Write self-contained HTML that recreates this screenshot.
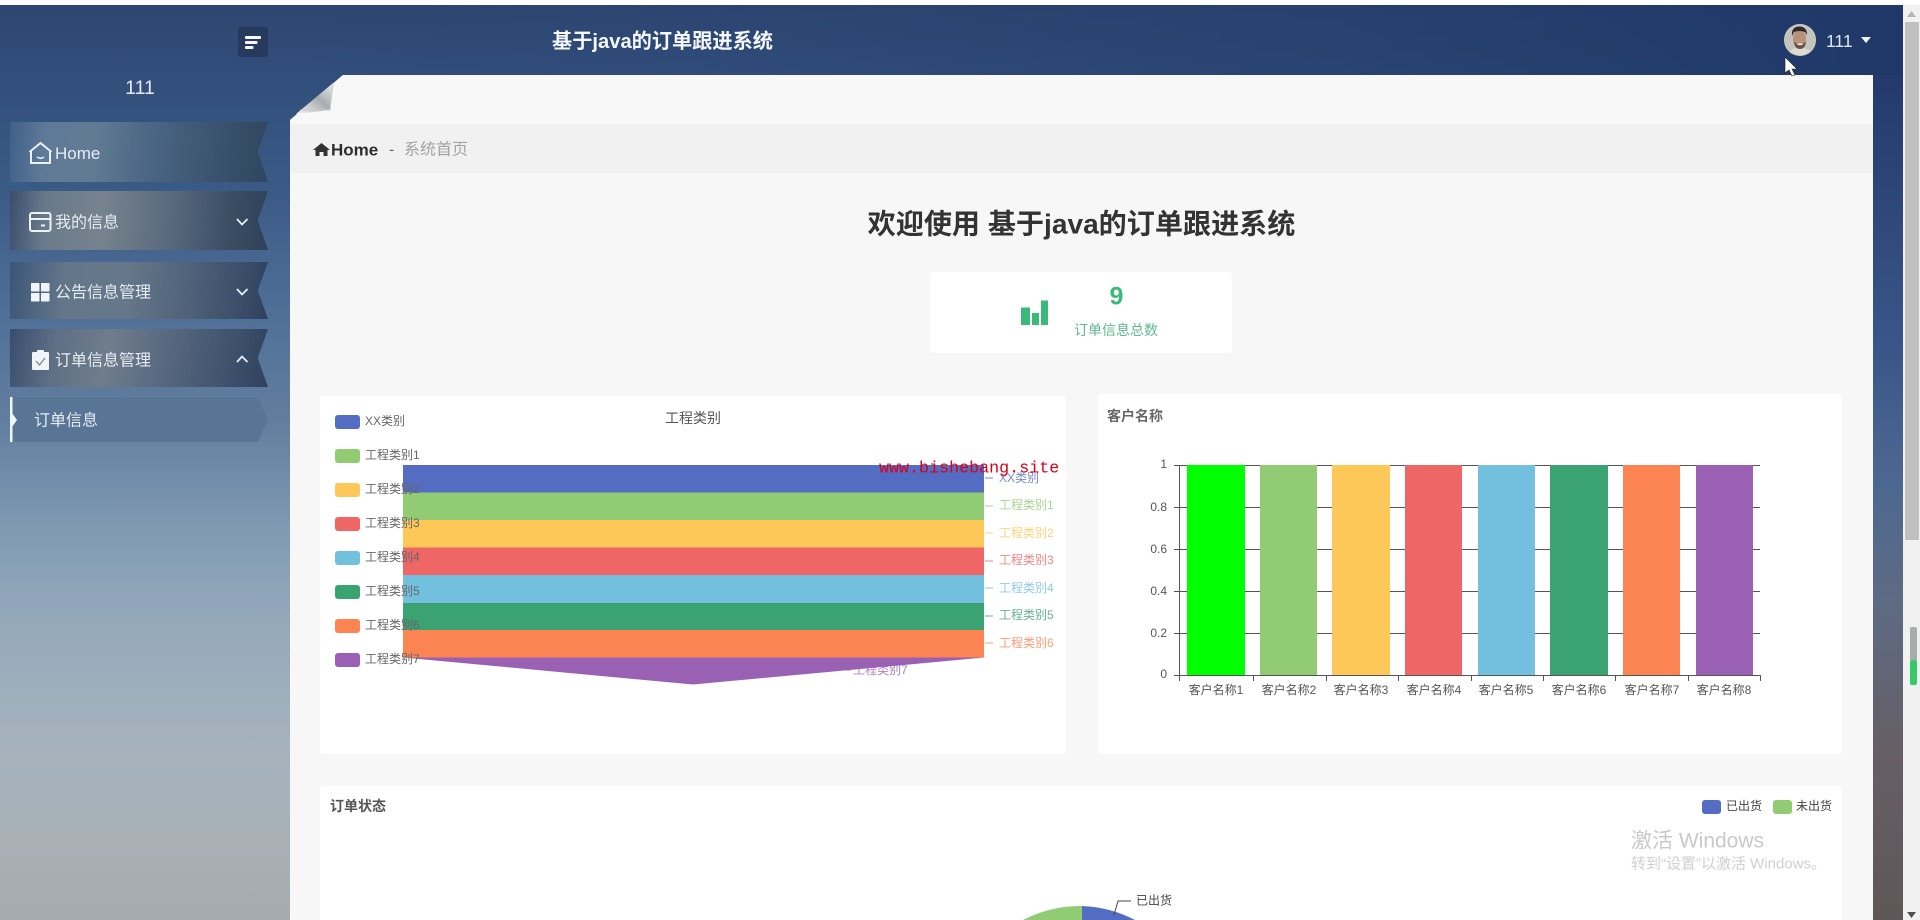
<!DOCTYPE html>
<html lang="zh">
<head>
<meta charset="utf-8">
<title>基于java的订单跟进系统</title>
<style>
html,body{margin:0;padding:0;width:1920px;height:920px;overflow:hidden;background:#fff;}
body{position:relative;font-family:"Liberation Sans","Noto Sans CJK SC",sans-serif;}
#bg{position:absolute;left:0;top:5px;width:1903px;height:915px;background:
 linear-gradient(180deg,#2e4671 0,#314d79 60px,#3a5a86 180px,#4d6e96 300px,#637f9f 420px,#7f99b3 520px,#95a9bb 620px,#a5b2bd 740px,#a8b0b5 850px,#a5abaf 915px);}
#top{position:absolute;left:290px;top:5px;width:1613px;height:70px;background:linear-gradient(90deg,rgba(31,56,104,0) 0,rgba(31,56,104,.12) 30%,rgba(31,56,104,.45) 65%,rgba(31,56,104,1) 100%);}
#strip{position:absolute;left:1873px;top:75px;width:30px;height:845px;background:linear-gradient(180deg,#233a6b 0,#3a5688 275px,#4c6890 405px,#5d6b84 525px,#665f65 675px,#5f5658 845px);}
#content{position:absolute;left:290px;top:75px;width:1583px;height:845px;background:#f7f7f8;clip-path:polygon(53px 0,100% 0,100% 100%,0 100%,0 45px);}
#band1{position:absolute;left:0;top:0;width:100%;height:49px;background:#f8f8f8;}
#band2{position:absolute;left:0;top:49px;width:100%;height:49px;background:#f1f1f1;}
.card{position:absolute;background:#fff;border-radius:3px;}
.item{position:absolute;left:10px;width:258px;clip-path:polygon(0 0,100% 0,96% 50%,100% 100%,0 100%);}
#sb{position:absolute;left:1903px;top:5px;width:17px;height:915px;background:#f1f1f1;}
#thumb{position:absolute;left:2px;top:17px;width:14px;height:518px;background:#bfc0bf;}
svg{position:absolute;left:0;top:0;overflow:hidden;}
</style>
</head>
<body>
<div id="bg"></div>
<div id="top"></div>
<div id="strip"></div>

<div class="item" style="top:122px;height:60px;background:linear-gradient(95deg,#3f6089 0,#5f7a96 14%,#627b95 32%,#4a6582 55%,#3a526d 80%,#304660 100%);"></div>
<div class="item" style="top:191px;height:59px;background:linear-gradient(95deg,#3a4f6e 0,#6a7a8a 14%,#76838f 36%,#59697d 62%,#3a4d63 85%,#2f4258 100%);"></div>
<div class="item" style="top:262px;height:57px;background:linear-gradient(95deg,#3c5578 0,#64778a 22%,#66778a 45%,#50637a 68%,#394d69 90%,#2f415c 100%);"></div>
<div class="item" style="top:329px;height:58px;background:linear-gradient(100deg,#384d6f 0,#5f6f84 18%,#6f7d8c 38%,#55667d 62%,#3e516c 85%,#2f415d 100%);"></div>
<div style="position:absolute;left:10px;top:397px;width:258px;height:45px;background:#587595;clip-path:polygon(0 0,96% 0,100% 50%,96% 100%,0 100%);"></div>

<div id="content">
  <div id="band1"></div>
  <div id="band2"></div>
  <div class="card" style="left:640px;top:197px;width:302px;height:81px;"></div>
  <div class="card" style="left:30px;top:321px;width:746px;height:358px;"></div>
  <div class="card" style="left:808px;top:319px;width:744px;height:360px;"></div>
  <div class="card" style="left:30px;top:711px;width:1522px;height:209px;"></div>
</div>

<div id="sb"><div id="thumb"></div></div>

<svg width="1920" height="920" viewBox="0 0 1920 920" xmlns="http://www.w3.org/2000/svg" font-family="'Liberation Sans','Noto Sans CJK SC',sans-serif">
  <defs>
    <linearGradient id="fold" x1="0" y1="1" x2="1" y2="0">
      <stop offset="0" stop-color="#f4f4f4"/><stop offset=".55" stop-color="#a9adb0"/><stop offset="1" stop-color="#eaeaea"/>
    </linearGradient>
    <clipPath id="avc"><circle cx="1800" cy="40" r="15"/></clipPath>
  </defs>

  <!-- page fold -->
  <polygon points="296,114 333,83 330,110" fill="url(#fold)"/>
  <path d="M333 83 L330 110 L300 110" fill="none" stroke="#c9c9c9" stroke-width="1"/>

  <!-- toggle -->
  <rect x="238" y="27" width="30" height="30" rx="3" fill="#263a5e"/>
  <rect x="245" y="36" width="16" height="3" rx="1" fill="#f3f7fb"/>
  <rect x="245" y="41" width="12.5" height="3" rx="1" fill="#f3f7fb"/>
  <rect x="245" y="46" width="8.5" height="3" rx="1" fill="#f3f7fb"/>

  <text x="552" y="42" font-size="20.2" font-weight="700" fill="#f4f8fc" dominant-baseline="central">基于java的订单跟进系统</text>
  <text x="140" y="88" font-size="19.5" fill="#e4ebf2" text-anchor="middle" dominant-baseline="central">111</text>

  <!-- top right -->
  <circle cx="1800" cy="40" r="16" fill="#cfcfcb"/>
  <g clip-path="url(#avc)">
    <rect x="1784" y="24" width="32" height="32" fill="#c3c2bb"/>
    <path d="M1786 56 Q1790 49 1796 48 L1804 48 Q1811 50 1815 56 Z" fill="#e0dbd0"/>
    <ellipse cx="1799.500" cy="39" rx="6.500" ry="9.500" fill="#b9907a"/>
    <path d="M1792 36 Q1791 27 1799 26.500 Q1807 26.500 1807 35 L1805 32 Q1799 30 1794 32 Z" fill="#2f2a26"/>
    <path d="M1794 42 Q1795 49 1800 49 Q1805 49 1806 42 Q1800 45 1794 42 Z" fill="#6a5145"/>
    <path d="M1796 43.500 Q1800 47 1804 43.500 Z" fill="#f5f3ee"/>
  </g>
  <text x="1826" y="41" font-size="17.500" fill="#dce7f2" dominant-baseline="central">111</text>
  <polygon points="1861,37 1871,37 1866,43" fill="#f4f7fa"/>
  <polygon points="1785,57 1785,73 1789,70 1792,76 1795,75 1792,69 1797,69" fill="#fff" stroke="#222" stroke-width=".6"/>

  <!-- sidebar icons -->
  <g fill="none" stroke="#e9f1f9" stroke-width="2">
    <path d="M29.500 152 L40.500 143 L51.500 152 M31 151 V163 H50 V151"/>
    <path d="M37 157 Q40.500 159.500 44 157" stroke-width="1.6"/>
    <rect x="30" y="213" width="20.500" height="18" rx="2"/>
    <path d="M30 219 H50.500"/>
    <path d="M41 225.500 H45"/>
    <path d="M237 219 L242 224.500 L247.500 219" stroke-width="1.7"/>
    <path d="M237 289 L242 294.500 L247.500 289" stroke-width="1.7"/>
    <path d="M237 362 L242 356.500 L247.500 362" stroke-width="1.7"/>
  </g>
  <g fill="#f0f5fa">
    <rect x="31" y="283" width="8.500" height="8.500" rx=".6"/><rect x="41" y="283" width="8.500" height="8.500" rx=".6"/>
    <rect x="31" y="293" width="8.500" height="8.500" rx=".6"/><rect x="41" y="293" width="8.500" height="8.500" rx=".6"/>
    <rect x="32" y="352" width="17" height="18" rx="1"/>
    <rect x="37" y="350" width="7" height="4" rx="1"/>
    <rect x="10" y="397" width="2.500" height="45"/>
    <polygon points="12,413 17,420 12,427"/>
  </g>
  <path d="M36 361 L39.500 365 L45 358" fill="none" stroke="#8b97a4" stroke-width="1.500"/>
  <g font-size="16" fill="#e6edf4">
    <text x="55" y="153.500" font-size="17" dominant-baseline="central">Home</text>
    <text x="55" y="223" dominant-baseline="central">我的信息</text>
    <text x="55" y="293" dominant-baseline="central">公告信息管理</text>
    <text x="55" y="361" dominant-baseline="central">订单信息管理</text>
    <text x="34" y="421" dominant-baseline="central">订单信息</text>
  </g>

  <!-- breadcrumb -->
  <path d="M313 150 L321.500 143 L330 150 L327.500 150 V156 H323.500 V152 H319.500 V156 H315.500 V150 Z" fill="#333"/>
  <text x="331" y="150" font-size="17" font-weight="700" fill="#2e2e2e" dominant-baseline="central">Home</text>
  <text x="389" y="150" font-size="16" fill="#666" dominant-baseline="central">-</text>
  <text x="404" y="150" font-size="16" fill="#a3a3a3" dominant-baseline="central">系统首页</text>

  <text x="1081.500" y="224" font-size="28.100" font-weight="700" fill="#333" text-anchor="middle" dominant-baseline="central">欢迎使用 基于java的订单跟进系统</text>

  <!-- stat -->
  <g fill="#3ab97b">
    <rect x="1021" y="307.500" width="9" height="17.500"/>
    <rect x="1032" y="313" width="7" height="12"/>
    <rect x="1041" y="300.500" width="7" height="24.500"/>
  </g>
  <text x="1116.500" y="296.500" font-size="25" font-weight="700" fill="#3ab97b" text-anchor="middle" dominant-baseline="central">9</text>
  <text x="1116" y="330" font-size="14" fill="#62b892" text-anchor="middle" dominant-baseline="central">订单信息总数</text>

  <!-- funnel -->
  <rect x="403" y="465" width="581" height="27.500" fill="#546cc2"/>
  <rect x="403" y="492.500" width="581" height="27.500" fill="#91cc75"/>
  <rect x="403" y="520" width="581" height="27.500" fill="#fdc858"/>
  <rect x="403" y="547.500" width="581" height="27.500" fill="#ee6666"/>
  <rect x="403" y="575" width="581" height="28" fill="#73c0de"/>
  <rect x="403" y="603" width="581" height="27" fill="#3ba272"/>
  <rect x="403" y="630" width="581" height="27.500" fill="#fc8452"/>
  <polygon points="403,657.500 984,657.500 693,684.500" fill="#9a60b4"/>
  <text x="693" y="418" font-size="14" fill="#555" text-anchor="middle" dominant-baseline="central">工程类别</text>

  <g>
    <rect x="335" y="415" width="25" height="14" rx="3" fill="#546cc2"/>
    <rect x="335" y="449" width="25" height="14" rx="3" fill="#91cc75"/>
    <rect x="335" y="483" width="25" height="14" rx="3" fill="#fdc858"/>
    <rect x="335" y="517" width="25" height="14" rx="3" fill="#ee6666"/>
    <rect x="335" y="551" width="25" height="14" rx="3" fill="#73c0de"/>
    <rect x="335" y="585" width="25" height="14" rx="3" fill="#3ba272"/>
    <rect x="335" y="619" width="25" height="14" rx="3" fill="#fc8452"/>
    <rect x="335" y="653" width="25" height="14" rx="3" fill="#9a60b4"/>
  </g>
  <g font-size="12" fill="#666">
    <text x="365" y="421" dominant-baseline="central">XX类别</text>
    <text x="365" y="455" dominant-baseline="central">工程类别1</text>
    <text x="365" y="489" dominant-baseline="central">工程类别2</text>
    <text x="365" y="523" dominant-baseline="central">工程类别3</text>
    <text x="365" y="557" dominant-baseline="central">工程类别4</text>
    <text x="365" y="591" dominant-baseline="central">工程类别5</text>
    <text x="365" y="625" dominant-baseline="central">工程类别6</text>
    <text x="365" y="659" dominant-baseline="central">工程类别7</text>
  </g>
  <g stroke-width="1" fill="none" opacity=".8">
    <path d="M985 478 H993" stroke="#546cc2"/>
    <path d="M985 506 H993" stroke="#91cc75"/>
    <path d="M985 533 H993" stroke="#fdc858"/>
    <path d="M985 561 H993" stroke="#ee6666"/>
    <path d="M985 588 H993" stroke="#73c0de"/>
    <path d="M985 616 H993" stroke="#3ba272"/>
    <path d="M985 643 H993" stroke="#fc8452"/>
    <path d="M836 670 H851" stroke="#9a60b4"/>
  </g>
  <g font-size="12" opacity=".8">
    <text x="999" y="478" fill="#546cc2" dominant-baseline="central">XX类别</text>
    <text x="999" y="505" fill="#91cc75" dominant-baseline="central">工程类别1</text>
    <text x="999" y="533" fill="#fdc858" dominant-baseline="central">工程类别2</text>
    <text x="999" y="560" fill="#ee6666" dominant-baseline="central">工程类别3</text>
    <text x="999" y="588" fill="#73c0de" dominant-baseline="central">工程类别4</text>
    <text x="999" y="615" fill="#3ba272" dominant-baseline="central">工程类别5</text>
    <text x="999" y="643" fill="#fc8452" dominant-baseline="central">工程类别6</text>
    <text x="853" y="670" fill="#9a60b4" dominant-baseline="central">工程类别7</text>
  </g>
  <text x="879" y="469" font-family="'Liberation Mono',monospace" font-size="16.700" fill="#d9001b" dominant-baseline="central">www.bishebang.site</text>

  <!-- bar chart -->
  <text x="1107" y="416" font-size="14" font-weight="700" fill="#666" dominant-baseline="central">客户名称</text>
  <g stroke="#555" stroke-width="1" fill="none">
    <path d="M1174 465.500 H1760 M1174 507.500 H1760 M1174 549.500 H1760 M1174 591.500 H1760 M1174 633.500 H1760 M1174 675.500 H1760"/>
    <path d="M1179.500 465 V675"/>
    <path d="M1179.500 675 V681 M1253.500 675 V681 M1326.500 675 V681 M1398.500 675 V681 M1471.500 675 V681 M1543.500 675 V681 M1615.500 675 V681 M1688.500 675 V681 M1760.500 675 V681"/>
  </g>
  <rect x="1187" y="465" width="58" height="210" fill="#00ff00"/>
  <rect x="1260" y="465" width="57" height="210" fill="#91cc75"/>
  <rect x="1332" y="465" width="58" height="210" fill="#fdc858"/>
  <rect x="1405" y="465" width="57" height="210" fill="#ee6666"/>
  <rect x="1478" y="465" width="57" height="210" fill="#73c0de"/>
  <rect x="1550" y="465" width="58" height="210" fill="#3ba272"/>
  <rect x="1623" y="465" width="57" height="210" fill="#fc8452"/>
  <rect x="1696" y="465" width="57" height="210" fill="#9a60b4"/>
  <g font-size="12" fill="#555" text-anchor="end">
    <text x="1167" y="464" dominant-baseline="central">1</text>
    <text x="1167" y="507" dominant-baseline="central">0.8</text>
    <text x="1167" y="549" dominant-baseline="central">0.6</text>
    <text x="1167" y="591" dominant-baseline="central">0.4</text>
    <text x="1167" y="633" dominant-baseline="central">0.2</text>
    <text x="1167" y="674" dominant-baseline="central">0</text>
  </g>
  <g font-size="12" fill="#555" text-anchor="middle">
    <text x="1216" y="690" dominant-baseline="central">客户名称1</text>
    <text x="1289" y="690" dominant-baseline="central">客户名称2</text>
    <text x="1361" y="690" dominant-baseline="central">客户名称3</text>
    <text x="1434" y="690" dominant-baseline="central">客户名称4</text>
    <text x="1506" y="690" dominant-baseline="central">客户名称5</text>
    <text x="1579" y="690" dominant-baseline="central">客户名称6</text>
    <text x="1652" y="690" dominant-baseline="central">客户名称7</text>
    <text x="1724" y="690" dominant-baseline="central">客户名称8</text>
  </g>

  <!-- pie: cropped at the frame edge -->
  <text x="330" y="806" font-size="14" font-weight="700" fill="#555" dominant-baseline="central">订单状态</text>
  <rect x="1702" y="800" width="19" height="14" rx="3" fill="#546cc2"/>
  <text x="1726" y="806" font-size="12" fill="#444" dominant-baseline="central">已出货</text>
  <rect x="1773" y="800" width="19" height="14" rx="3" fill="#91cc75"/>
  <text x="1796" y="806" font-size="12" fill="#444" dominant-baseline="central">未出货</text>
  <path d="M1082 906 A125 125 0 0 1 1135 920 L1082 920 Z" fill="#546cc2"/>
  <path d="M1082 906 A125 125 0 0 0 1023 920 L1082 920 Z" fill="#91cc75"/>
  <path d="M1114 915 L1118 901 H1131" fill="none" stroke="#444" stroke-width="1"/>
  <text x="1136" y="900.500" font-size="12" fill="#444" dominant-baseline="central">已出货</text>

  <text x="1631" y="841" font-size="21" fill="#c9c9c9" dominant-baseline="central">激活 Windows</text>
  <text x="1631" y="864" font-size="15" fill="#cfcfcf" dominant-baseline="central">转到“设置”以激活 Windows。</text>

  <!-- scrollbar detail -->
  <polygon points="1911.500,11 1907,17 1916,17" fill="#b5b5b5"/>
  <polygon points="1907,912 1916,912 1911.500,918" fill="#505050"/>
  <rect x="1910" y="627" width="7" height="34" rx="2" fill="#a9acab"/>
  <rect x="1910" y="660" width="7" height="25" rx="2" fill="#35c968"/>
</svg>
</body>
</html>
